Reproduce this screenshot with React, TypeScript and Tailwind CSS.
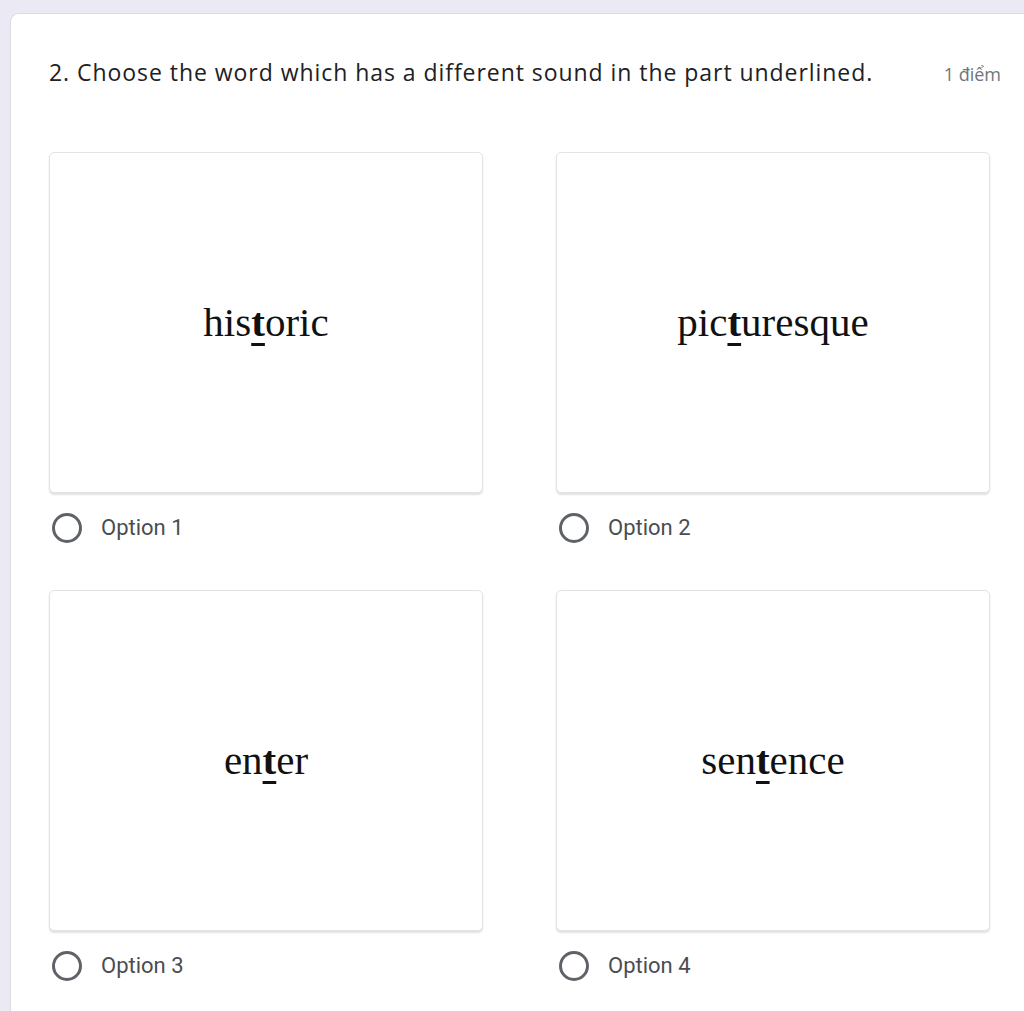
import React from 'react';

type Choice = { before: string; mark: string; after: string; label: string };

const choices: Choice[] = [
  { before: 'his', mark: 't', after: 'oric', label: 'Option 1' },
  { before: 'pic', mark: 't', after: 'uresque', label: 'Option 2' },
  { before: 'en', mark: 't', after: 'er', label: 'Option 3' },
  { before: 'sen', mark: 't', after: 'ence', label: 'Option 4' },
];

const ChoiceCard: React.FC<{ choice: Choice }> = ({ choice }) => (
  <div className="flex flex-col">
    <div className="h-[341px] w-[434px] rounded-[5px] border border-[#e3e3e6] bg-white shadow-[0_2px_2px_rgba(0,0,0,0.12)] flex items-center justify-center">
      <span className="text-[41px] text-[#111] leading-none" style={{ fontFamily: '"Liberation Serif", "Times New Roman", serif' }}>
        {choice.before}
        <span className="font-bold underline decoration-[3px] underline-offset-[7px]">{choice.mark}</span>
        {choice.after}
      </span>
    </div>
    <label className="mt-[20px] flex items-center gap-[19px] pl-[3px] h-[30px] cursor-pointer">
      <span className="h-[30px] w-[30px] rounded-full border-[3px] border-[#5f6368]" />
      <span className="text-[22px] text-[#4a4d51]" style={{ fontFamily: 'Roboto, "Liberation Sans", sans-serif' }}>
        {choice.label}
      </span>
    </label>
  </div>
);

export default function App() {
  return (
    <div className="min-h-[1011px] bg-[#ebeaf4] pt-[13px] pl-[10px] overflow-hidden">
      <div className="min-h-[998px] bg-white rounded-tl-[9px] border-l border-t border-[#dadce0] pl-[38px] pt-[41px]">
        <div className="flex items-baseline w-[952px]" style={{ fontFamily: '"Open Sans", Roboto, sans-serif' }}>
          <h2 className="text-[23px] text-[#202124] font-normal tracking-[0.95px]">
            2. Choose the word which has a different sound in the part underlined.
          </h2>
          <span className="ml-auto text-[18px] text-[#70757a]">1 điểm</span>
        </div>
        <div className="mt-[62px] grid grid-cols-[434px_434px] gap-x-[73px] gap-y-[47px]">
          {choices.map((c) => (
            <ChoiceCard key={c.label} choice={c} />
          ))}
        </div>
      </div>
    </div>
  );
}
